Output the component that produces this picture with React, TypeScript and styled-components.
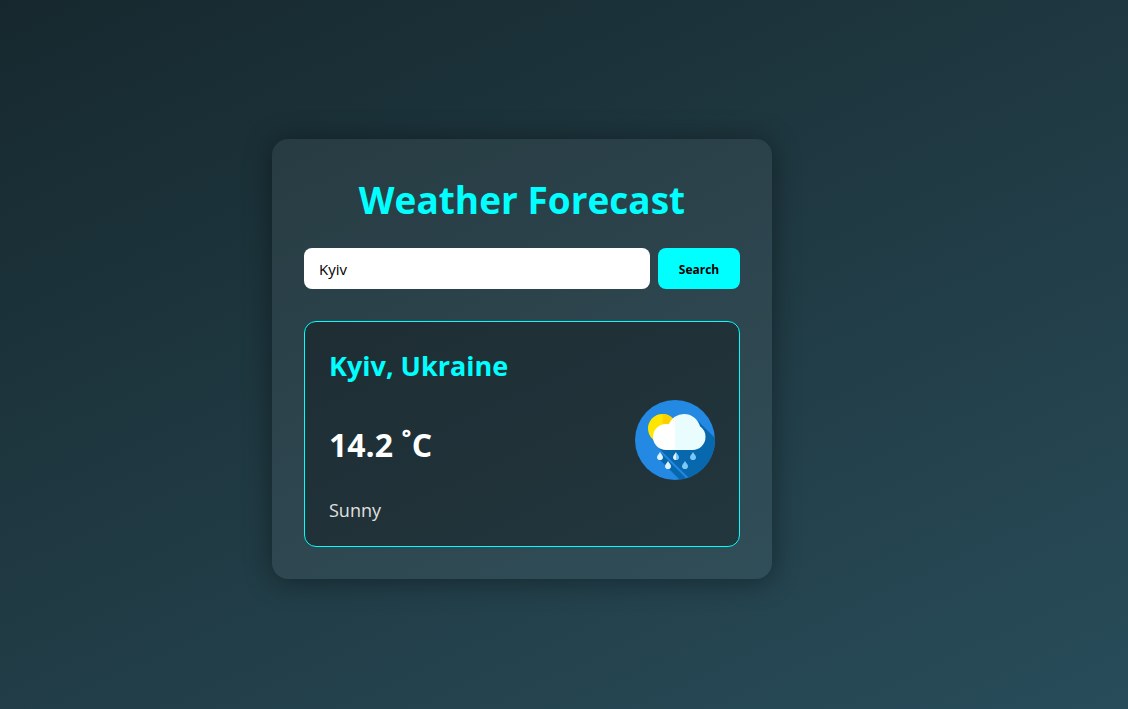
import React, { useState } from "react";
import styled, { createGlobalStyle } from "styled-components";

const GlobalStyle = createGlobalStyle`
  *, *::before, *::after { box-sizing: border-box; }
  body {
    margin: 0;
    font-family: "Segoe UI", "Open Sans", "Noto Sans", sans-serif;
    color: #fff;
  }
`;

const Page = styled.main`
  min-height: 100vh;
  display: flex;
  align-items: center;
  justify-content: center;
  padding: 9px 84px 0 0;
  background: linear-gradient(155deg, #16282e, #203a43 50%, #284c5a);
`;

const Panel = styled.section`
  width: 100%;
  max-width: 500px;
  padding: 32px;
  border-radius: 16px;
  background: rgba(255, 255, 255, 0.06);
  box-shadow: 0 2px 28px rgba(0, 0, 0, 0.4);
`;

const Title = styled.h1`
  margin: 0 0 20px;
  font-size: 37px;
  line-height: 57px;
  font-weight: 700;
  text-align: center;
  color: #00ffff;
`;

const SearchForm = styled.form`
  display: flex;
  gap: 8px;
  margin-bottom: 32px;
`;

const CityInput = styled.input`
  flex: 1;
  min-width: 0;
  height: 41px;
  padding: 0 15px;
  border: 0;
  border-radius: 8px;
  background: #fff;
  color: #000;
  font-family: inherit;
  font-size: 15px;
`;

const SearchButton = styled.button`
  width: 82px;
  padding: 1px 0 0;
  border: 0;
  border-radius: 8px;
  background: #00ffff;
  color: #000;
  font-family: inherit;
  font-size: 12px;
  font-weight: 700;
  cursor: pointer;
`;

const WeatherCard = styled.article`
  padding: 24px;
  border: 1px solid #00ffff;
  border-radius: 12px;
  background: rgba(0, 0, 0, 0.29);
`;

const Place = styled.h2`
  margin: 0 0 14px;
  font-size: 27px;
  line-height: 40px;
  font-weight: 700;
  color: #00ffff;
`;

const Reading = styled.div`
  display: flex;
  align-items: center;
  justify-content: space-between;
  margin-bottom: 16px;
`;

const Temperature = styled.p`
  margin: 10px 0 0;
  font-size: 32px;
  line-height: 44px;
  font-weight: 700;
`;

const Condition = styled.p`
  margin: 0;
  padding-top: 2px;
  font-size: 18px;
  line-height: 24px;
  color: #e0e0e0;
`;

const Picture = styled.svg`
  display: block;
  width: 80px;
  height: 80px;
`;

const drops = [
  { x: 25, y: 56, left: "#dff3fd", right: "#dff3fd" },
  { x: 41, y: 56, left: "#dff3fd", right: "#7cc9f7" },
  { x: 58, y: 56, left: "#7cc9f7", right: "#7cc9f7" },
  { x: 33, y: 65, left: "#dff3fd", right: "#dff3fd" },
  { x: 50, y: 65, left: "#7cc9f7", right: "#7cc9f7" },
];

function RainIcon() {
  return (
    <Picture viewBox="0 0 80 80" role="img" aria-label="Rain showers">
      <defs>
        <clipPath id="disc"><circle cx="40" cy="40" r="40" /></clipPath>
        <clipPath id="cloud">
          <circle cx="31" cy="37" r="13" />
          <circle cx="49" cy="30.5" r="16.5" />
          <circle cx="57.500" cy="37" r="13" />
          <rect x="31" y="34" width="26.500" height="16" />
        </clipPath>
      </defs>
      <circle cx="40" cy="40" r="40" fill="#2389e2" />
      <g clipPath="url(#disc)" fill="#0868ad">
        <path d="M61 19 84 42V84H60L21.800 46.200 40 30Z" />
        <path d="M23 58 27 54 56 83H48Z" />
      </g>
      <circle cx="27.500" cy="28.500" r="14.500" fill="#ffe600" />
      <path d="M27.500 14a14.500 14.500 0 0 1 0 29Z" fill="#ffd000" />
      <g clipPath="url(#cloud)">
        <rect x="16" y="12" width="24" height="40" fill="#fff" />
        <rect x="40" y="12" width="32" height="40" fill="#e9fdff" />
      </g>
      {drops.map((d) => (
        <g key={`${d.x}-${d.y}`} transform={`translate(${d.x} ${d.y})`}>
          <path d="M0-4C-1-2-3-.5-3 1.200A3 2.900 0 0 0 0 4Z" fill={d.left} />
          <path d="M0-4C1-2 3-.5 3 1.200A3 2.900 0 0 1 0 4Z" fill={d.right} />
        </g>
      ))}
    </Picture>
  );
}

export default function App() {
  const [city, setCity] = useState("Kyiv");
  return (
    <>
      <GlobalStyle />
      <Page>
        <Panel>
          <Title>Weather Forecast</Title>
          <SearchForm onSubmit={(e) => e.preventDefault()}>
            <CityInput
              type="text"
              aria-label="City"
              value={city}
              onChange={(e) => setCity(e.target.value)}
            />
            <SearchButton type="submit">Search</SearchButton>
          </SearchForm>
          <WeatherCard>
            <Place>Kyiv, Ukraine</Place>
            <Reading>
              <Temperature>14.2 ˚C</Temperature>
              <RainIcon />
            </Reading>
            <Condition>Sunny</Condition>
          </WeatherCard>
        </Panel>
      </Page>
    </>
  );
}
